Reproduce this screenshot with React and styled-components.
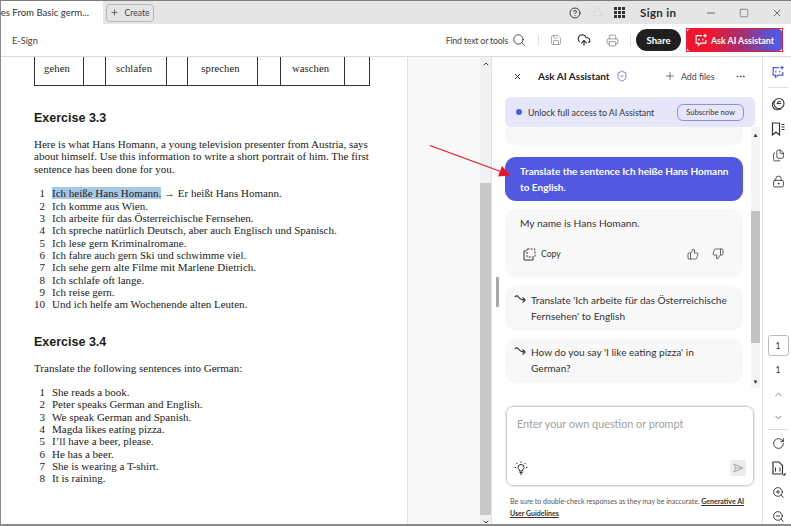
import React from "react";
import styled, { createGlobalStyle } from "styled-components";
import {
  X, Plus, Search, Save, CloudUpload, Printer, Bell, Minus, Square, Ellipsis, ShieldCheck,
  ThumbsUp, ThumbsDown, Files, LockKeyhole, ChevronUp, ChevronDown, RotateCw,
  ZoomIn, ZoomOut, CircleHelp,
} from "lucide-react";

const Global = createGlobalStyle`
  html, body { margin: 0; padding: 0; background: #fff; }
  * { box-sizing: border-box; }
  body { font-family: Lato, "Open Sans", sans-serif; color: #2c2c2c; }
`;

const Win = styled.div`
  width: 791px; height: 526px; position: relative; overflow: hidden; display: flex; flex-direction: column;
  background: #fff; border-top: 1px solid #7d7d7d; border-left: 1px solid #8a8a8a; border-bottom: 2px solid #8a8a8a;
`;
const TabBar = styled.div`height: 23px; background: #e5e5e5; display: flex; align-items: center;`;
const Tab = styled.div`
  width: 102px; height: 23px; background: #fff; display: flex; align-items: center; justify-content: flex-end;
  overflow: hidden; white-space: nowrap; font-size: 9.6px; color: #333; gap: 8px; padding-right: 6px;
`;
const CreateBtn = styled.div`
  margin-left: 3px; width: 48px; height: 18px; border: 1px solid #b5b5b5; border-radius: 4px; display: flex; align-items: center;
  justify-content: center; gap: 5px; font-size: 8.6px; color: #444;
`;
const TabSpacer = styled.div`flex: 1;`;
const WinControls = styled.div`display: flex; align-items: center; height: 23px; margin-right: -2px;`;
const HelpSlot = styled.div`width: 22px; display: flex; justify-content: center; color: ${p => p.$c || "#2c2c2c"};`;
const SignIn = styled.div`font-size: 11.5px; font-weight: 700; letter-spacing: .35px; width: 64px; padding-left: 10px; color: #2c2c2c;`;
const WinBtn = styled.div`width: 33px; display: flex; justify-content: center; color: #444;`;
const Dots = styled.div`
  display: grid; grid-template-columns: repeat(3, 3px); gap: 1px;
  & > i { width: 3px; height: 3px; background: #333; display: block; }
`;

const Toolbar = styled.div`height: 33px; border-bottom: 1px solid #dcdcdc; display: flex; align-items: center; padding-left: 11px;`;
const ESign = styled.div`font-size: 9.2px; color: #444; flex: 1;`;
const Find = styled.div`font-size: 8.8px; letter-spacing: -.2px; color: #444; margin-right: 3px; white-space: nowrap;`;
const ToolIcon = styled.div`width: ${p => p.$w || 32}px; display: flex; justify-content: center; color: ${p => p.$c || "#444"};`;
const Sep = styled.div`width: 1px; height: 11px; background: #ddd;`;
const Share = styled.div`
  width: 45px; height: 22px; background: #1f1f1f; color: #fff; border-radius: 11px; font-size: 9.6px; font-weight: 700;
  display: flex; align-items: center; justify-content: center; margin: 0 5px;
`;
const AskFrame = styled.div`width: 97px; height: 24px; border: 1px solid #e0203a; background: #fff;`;
const AskBtn = styled.div`
  height: 100%; background: linear-gradient(90deg, #f0142b 0%, #ee1830 25%, #a23070 58%, #5258e0 92%);
  color: #fff; font-size: 8.8px; font-weight: 700; display: flex; align-items: center; gap: 3px; padding-left: 7px; border-radius: 4px; white-space: nowrap;
`;

const Main = styled.div`flex: 1; display: flex; min-height: 0;`;
const Doc = styled.div`width: 406px; padding-left: 33px; font-family: "Liberation Serif", serif; color: #222; font-size: 11px; overflow: hidden;`;
const WordTable = styled.div`
  width: 336px; height: 29px; display: grid; grid-template-columns: 48px 22px 61px 21px 70px 23px 64px 27px; border: solid #333; border-width: 0 1px 1px 1px;
`;
const Cell = styled.div`
  border-left: ${p => p.$first ? "0" : "1px solid #333"}; padding: 6px 4px 0 0; text-align: center; font-size: 10.6px; letter-spacing: .1px;
`;
const H = styled.h2`font: 700 12.5px/16px "Liberation Sans", sans-serif; margin: ${p => p.$mt}px 0 ${p => p.$mb}px; color: #1c1c1c;`;
const Para = styled.div`width: 340px; line-height: 12.4px; white-space: nowrap; margin-bottom: 12px;`;
const Li = styled.div`display: flex; height: 12.35px; line-height: 12.35px; white-space: nowrap;`;
const N = styled.span`width: 11px; text-align: right; margin-right: 7px; flex: none;`;
const Mark = styled.span`background: #a5c8e4;`;
const Gutter = styled.div`width: 73px; background: #f8f8f8; border-left: 1px solid #e2e2e2;`;
const Track = styled.div`width: 11px; background: #f1f1f1; display: flex; flex-direction: column; align-items: center;`;
const TrackEnd = styled.div`height: ${p => p.$h}px; padding-top: 3px; color: #444; display: flex; justify-content: center; width: 100%; flex: none;`;
const Thumb = styled.div`flex: 1; width: 11px; background: #c8c8c8;`;
const Panel = styled.div`width: 271px; display: flex; flex-direction: column; border-left: 1px solid #e2e2e2;`;
const PanelHead = styled.div`height: 40px; padding: 0 0 2px 21px; display: flex; align-items: center;`;
const PanelTitle = styled.div`font-size: 10px; font-weight: 700; margin-left: 16px; color: #222; width: 74px; white-space: nowrap;`;
const AddFiles = styled.div`font-size: 8.8px; color: #444; margin-left: 36px; display: flex; align-items: center; gap: 5px; white-space: nowrap;`;
const Banner = styled.div`
  margin-left: 13px; width: 250px; height: 30px; background: #e6e6fb; border-radius: 6px; display: flex; align-items: center; padding: 0 11px 0 11px; font-size: 8.8px; color: #333;
`;
const Dot = styled.span`width: 6px; height: 6px; border-radius: 50%; background: #5258e0; margin-right: 6px;`;
const Subscribe = styled.div`
  margin-left: auto; width: 67px; height: 17px; border: 1px solid #8f8fd8; border-radius: 6px; font-size: 7.6px; display: flex; align-items: center; justify-content: center; color: #333;
`;
const ChatArea = styled.div`height: 261px; display: flex;`;
const Messages = styled.div`width: 259px; padding-left: 13px; display: flex; flex-direction: column; overflow: hidden;`;
const Stub = styled.div`width: 238px; height: 19px; background: #f8f8f8; border-radius: 0 0 10px 10px; flex: none; margin-bottom: 11px;`;
const User = styled.div`
  width: 238px; height: 44px; flex: none; background: #5258e0; color: #fff; border-radius: 11px; padding: 6px 8px 0 15px; font-size: 10px; line-height: 16px; font-weight: 700; margin-bottom: 8px; white-space: nowrap;
`;
const Answer = styled.div`
  width: 238px; height: 68px; flex: none; background: #f8f8f8; border-radius: 11px; padding: 6px 10px 0 15px; font-size: 10.2px; line-height: 16px; margin-bottom: 9px; color: #333;
`;
const ActionRow = styled.div`display: flex; align-items: center; margin-top: 15px; padding-left: 3px; color: #333;`;
const CopyLabel = styled.span`font-size: 8.6px; margin-left: 5px; flex: 1;`;
const Thumbs = styled.div`display: flex; gap: 13px; padding-right: 9px;`;
const Suggest = styled.div`
  width: 238px; height: ${p => p.$h}px; flex: none; background: #f8f8f8; border-radius: 11px; padding: 6px 8px 0 9px; font-size: 10.1px; line-height: 16px; display: flex; margin-bottom: ${p => p.$mb}px; color: #333; white-space: nowrap;
`;
const Hook = styled.svg`flex: none; margin: 2px 5px 0 0;`;
const ChatBar = styled.div`width: 9px; background: #f4f4f4; display: flex; flex-direction: column; align-items: center; justify-content: space-between;`;
const ChatThumbWrap = styled.div`flex: 1; width: 100%; padding: 70px 0 31px;`;
const ChatThumb = styled.div`height: 100%; background: #c2c2c2;`;
const Arrowlet = styled.div`height: 14px; color: #333; font-size: 6px; display: flex; align-items: center; justify-content: center;`;
const InputBox = styled.div`
  margin: 18px 0 0 14px; width: 248px; height: 80px; border: 1px solid #d0d0d0; border-radius: 7px; display: flex; flex-direction: column; padding: 10px 7px 9px 10px;
  outline: 1px solid #ececec;
`;
const Placeholder = styled.div`font-size: 10.8px; color: #a0a0a0; flex: 1;`;
const InputFoot = styled.div`display: flex; justify-content: space-between; align-items: center;`;
const BulbSlot = styled.div`display: flex; margin-left: -3px;`;
const SendBox = styled.div`width: 16px; height: 16px; background: #ececec; border-radius: 2px; display: flex; align-items: center; justify-content: center;`;
const Disclaimer = styled.div`margin: 9px 0 0 18px; width: 248px; font-size: 7px; line-height: 12px; color: #555; white-space: nowrap;`;
const Guide = styled.span`font-weight: 700; text-decoration: underline; color: #333;`;
const Rail = styled.div`flex: 1; border-left: 1px solid #e2e2e2; display: flex; flex-direction: column; align-items: center; padding: 5px 0 0 2px; color: #333;`;
const RailItem = styled.div`height: ${p => p.$h || 25}px; display: flex; align-items: center; justify-content: center; flex: none; color: ${p => p.$c || "inherit"};`;
const RailSep = styled.div`width: 20px; height: 1px; background: #dedede; flex: none; margin: ${p => p.$m || "0"};`;
const PageBox = styled.div`width: 21px; height: 21px; border: 1px solid #bbb; border-radius: 3px; font-size: 8.6px; display: flex; align-items: center; justify-content: center; margin-top: 141px; flex: none;`;
const PageNum = styled.div`font-size: 8.6px; height: 27px; display: flex; align-items: center; flex: none;`;
const Handle = styled.div`position: absolute; left: 495px; top: 276px; width: 3px; height: 30px; background: #a8a8a8;`;
const Overlay = styled.svg`position: absolute; left: 0; top: 0; pointer-events: none;`;

const rows1 = ["Ich komme aus Wien.", "Ich arbeite für das Österreichische Fernsehen.", "Ich spreche natürlich Deutsch, aber auch Englisch und Spanisch.", "Ich lese gern Kriminalromane.", "Ich fahre auch gern Ski und schwimme viel.", "Ich sehe gern alte Filme mit Marlene Dietrich.", "Ich schlafe oft lange.", "Ich reise gern.", "Und ich helfe am Wochenende alten Leuten."];
const rows2 = ["She reads a book.", "Peter speaks German and English.", "We speak German and Spanish.", "Magda likes eating pizza.", "I’ll have a beer, please.", "He has a beer.", "She is wearing a T-shirt.", "It is raining."];

const HookIcon = () => (
  <Hook width="12" height="11" viewBox="0 0 12 11" fill="none" stroke="#333" strokeWidth="1.1">
    <path d="M1 3c1-1.600 2.500-1.400 3.500 0S6.500 6 11 6M8.500 3.300L11.200 6 8.500 8.700" />
  </Hook>
);

const AiIcon = ({ size = 14, color = "#fff" }) => (
  <svg width={size} height={size} viewBox="0 0 16 16" fill="none" stroke={color} strokeWidth="1.4">
    <path d="M9 3H2.500v8.500H5v2.500l3-2.500h5.500V8" />
    <path d="M5.500 6.500v2M10 6.500v2" />
    <path d="M12.500 1v4M10.500 3h4" />
  </svg>
);
const CopyIcon = () => (
  <svg width="13" height="13" viewBox="0 0 13 13" fill="none" stroke="#333" strokeWidth="1">
    <path d="M3 3H1v9h9v-2" />
    <rect x="4" y="1" width="8" height="8" rx=".5" strokeDasharray="2 1.200" />
  </svg>
);
const BulbIcon = () => (
  <svg width="14" height="14" viewBox="0 0 14 14" fill="none" stroke="#222" strokeWidth="1">
    <path d="M5.300 10V8.800C4.400 8.200 4 7.400 4 6.500a3 3 0 0 1 6 0c0 .9-.4 1.700-1.300 2.300V10z" />
    <path d="M5.500 11.500h3M6 13h2" strokeWidth="1.200" />
    <path d="M7 .5v1.300M2.300 2l1 1M11.700 2l-1 1M.7 6.500H2M12 6.500h1.300" />
  </svg>
);
const SwirlIcon = () => (
  <svg width="14" height="14" viewBox="0 0 14 14" fill="none" stroke="#333" strokeWidth="1.100">
    <circle cx="8" cy="6.500" r="5" />
    <path d="M10.300 6.500H6.200a2 2 0 0 1 3.500-1.300" />
    <path d="M3 4a5 5 0 0 0 2 8.500c2 .6 3.500.2 5-.5" />
  </svg>
);
const MarkIcon = () => (
  <svg width="15" height="14" viewBox="0 0 15 14" fill="none" stroke="#333" strokeWidth="1.200">
    <path d="M1.500 1h7v12l-3.500-3-3.500 3z" />
    <path d="M10.500 2.500h3M10.500 5h3M10.500 7.500h3" strokeWidth="1" />
  </svg>
);
const DocScaleIcon = () => (
  <svg width="15" height="15" viewBox="0 0 15 15" fill="none" stroke="#333" strokeWidth="1.200">
    <path d="M2 1h6l3.500 3.500V13H2z" />
    <path d="M4.500 6.500v4M6.800 7.500v.2M6.800 9.500v.2M9 6.500v4" strokeWidth="1" />
    <path d="M14.500 11.500v3h-3z" fill="#333" stroke="none" />
  </svg>
);

export default function App() {
  return (
    <Win>
      <Global />
      <TabBar>
        <Tab>
          <span>es From Basic germ...</span>
          <X size={9} color="#444" strokeWidth={2} />
        </Tab>
        <CreateBtn><Plus size={9} strokeWidth={2} />Create</CreateBtn>
        <TabSpacer />
        <WinControls>
          <HelpSlot><CircleHelp size={12} strokeWidth={1.8} /></HelpSlot>
          <HelpSlot $c="#d8d8d8"><Bell size={12} /></HelpSlot>
          <HelpSlot><Dots>{Array.from({ length: 9 }).map((_, i) => <i key={i} />)}</Dots></HelpSlot>
          <SignIn>Sign in</SignIn>
          <WinBtn><Minus size={12} strokeWidth={1.6} /></WinBtn>
          <WinBtn><Square size={10} strokeWidth={1.3} /></WinBtn>
          <WinBtn><X size={12} strokeWidth={1.5} /></WinBtn>
        </WinControls>
      </TabBar>
      <Toolbar>
        <ESign>E-Sign</ESign>
        <Find>Find text or tools</Find>
        <ToolIcon $w={16}><Search size={14} strokeWidth={1.6} /></ToolIcon>
        <ToolIcon $w={11} />
        <Sep />
        <ToolIcon $w={3} />
        <ToolIcon $w={28} $c="#888"><Save size={12} strokeWidth={1.4} /></ToolIcon>
        <ToolIcon $w={28} $c="#222"><CloudUpload size={14} strokeWidth={1.8} /></ToolIcon>
        <ToolIcon $w={28} $c="#888"><Printer size={13} strokeWidth={1.5} /></ToolIcon>
        <ToolIcon $w={4} />
        <Sep />
        <Share>Share</Share>
        <AskFrame><AskBtn><AiIcon />Ask AI Assistant</AskBtn></AskFrame>
        <ToolIcon $w={8} />
      </Toolbar>
      <Main>
        <Doc>
          <WordTable>
            <Cell $first>gehen</Cell><Cell /><Cell>schlafen</Cell><Cell /><Cell>sprechen</Cell><Cell /><Cell>waschen</Cell><Cell />
          </WordTable>
          <H $mt={24} $mb={12}>Exercise 3.3</H>
          <Para>
            Here is what Hans Homann, a young television presenter from Austria, says<br />
            about himself. Use this information to write a short portrait of him. The first<br />
            sentence has been done for you.
          </Para>
          <Li><N>1</N><span><Mark>Ich heiße Hans Homann.</Mark> → Er heißt Hans Homann.</span></Li>
          {rows1.map((t, i) => <Li key={t}><N>{i + 2}</N>{t}</Li>)}
          <H $mt={23} $mb={12}>Exercise 3.4</H>
          <Para>Translate the following sentences into German:</Para>
          {rows2.map((t, i) => <Li key={t}><N>{i + 1}</N>{t}</Li>)}
        </Doc>
        <Gutter />
        <Track>
          <TrackEnd $h={126}><ChevronUp size={8} strokeWidth={3} /></TrackEnd>
          <Thumb />
          <TrackEnd $h={9}><ChevronDown size={8} strokeWidth={3} /></TrackEnd>
        </Track>
        <Panel>
          <PanelHead>
            <X size={9} strokeWidth={2.4} color="#222" />
            <PanelTitle>Ask AI Assistant</PanelTitle>
            <ShieldCheck size={12} color="#5258e0" strokeWidth={1.5} style={{ marginLeft: 4 }} />
            <AddFiles><Plus size={12} strokeWidth={1.4} />Add files</AddFiles>
            <Ellipsis size={11} color="#444" style={{ marginLeft: 20 }} />
          </PanelHead>
          <Banner><Dot />Unlock full access to AI Assistant<Subscribe>Subscribe now</Subscribe></Banner>
          <ChatArea>
            <Messages>
              <Stub />
              <User>Translate the sentence Ich heiße Hans Homann<br />to English.</User>
              <Answer>
                My name is Hans Homann.
                <ActionRow>
                  <CopyIcon />
                  <CopyLabel>Copy</CopyLabel>
                  <Thumbs><ThumbsUp size={12} strokeWidth={1.4} /><ThumbsDown size={12} strokeWidth={1.4} /></Thumbs>
                </ActionRow>
              </Answer>
              <Suggest $h={45} $mb={7}><HookIcon /><span>Translate 'Ich arbeite für das Österreichische<br />Fernsehen' to English</span></Suggest>
              <Suggest $h={45} $mb={0}><HookIcon /><span>How do you say 'I like eating pizza' in<br />German?</span></Suggest>
            </Messages>
            <ChatBar>
              <Arrowlet>▲</Arrowlet>
              <ChatThumbWrap><ChatThumb /></ChatThumbWrap>
              <Arrowlet>▼</Arrowlet>
            </ChatBar>
          </ChatArea>
          <InputBox>
            <Placeholder>Enter your own question or prompt</Placeholder>
            <InputFoot>
              <BulbSlot><BulbIcon /></BulbSlot>
              <SendBox>
                <svg width="11" height="10" viewBox="0 0 11 10" fill="none" stroke="#aaa" strokeWidth="1"><path d="M1 1l9 4-9 4 1.500-4zM2.500 5H10" /></svg>
              </SendBox>
            </InputFoot>
          </InputBox>
          <Disclaimer>
            Be sure to double-check responses as they may be inaccurate. <Guide>Generative AI</Guide><br />
            <Guide>User Guidelines</Guide>
          </Disclaimer>
        </Panel>
        <Rail>
          <RailItem $h={20}><AiIcon size={14} color="#5258e0" /></RailItem>
          <RailSep $m="5px 0 3px" />
          <RailItem><SwirlIcon /></RailItem>
          <RailItem $h={26}><MarkIcon /></RailItem>
          <RailItem $h={27}><Files size={13} strokeWidth={1.5} /></RailItem>
          <RailItem><LockKeyhole size={13} strokeWidth={1.6} /></RailItem>
          <PageBox>1</PageBox>
          <PageNum>1</PageNum>
          <RailItem $c="#777" $h={22}><ChevronUp size={11} /></RailItem>
          <RailItem $c="#777" $h={24}><ChevronDown size={11} /></RailItem>
          <RailSep $m="0 0 1px" />
          <RailItem><RotateCw size={13} strokeWidth={1.7} /></RailItem>
          <RailItem $h={24}><DocScaleIcon /></RailItem>
          <RailItem><ZoomIn size={13} strokeWidth={1.7} /></RailItem>
          <RailItem $h={23}><ZoomOut size={13} strokeWidth={1.7} /></RailItem>
        </Rail>
      </Main>
      <Handle />
      <Overlay width="791" height="526" viewBox="0 0 791 526">
        <line x1="429" y1="144.500" x2="501" y2="171" stroke="#e21a2c" strokeWidth="1.300" />
        <path d="M509.500 174.500L497 175.500 501 165z" fill="#e9142a" />
      </Overlay>
    </Win>
  );
}
